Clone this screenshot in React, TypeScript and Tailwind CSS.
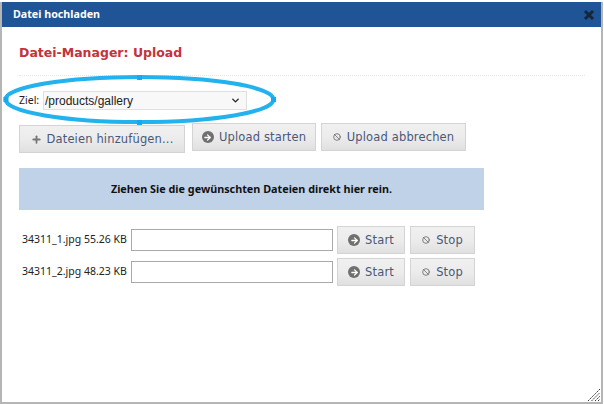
import { Plus, Ban, ArrowRight, ChevronDown } from 'lucide-react'

const btn =
  'flex items-center justify-center gap-[5px] border border-[#d4d4d4] bg-gradient-to-b from-[#f0f0f0] via-[#ececec] to-[#e0e0e0] pt-[2px] text-[#4a5878] font-["DejaVu_Sans",sans-serif] text-[11.5px] tracking-[0.15px]'

function GoIcon() {
  return (
    <span className="-mt-[2px] flex h-[12px] w-[12px] items-center justify-center rounded-full bg-[#707070]">
      <ArrowRight size={9} strokeWidth={3.5} className="text-white" />
    </span>
  )
}

function StopIcon() {
  return <Ban size={8} strokeWidth={2.5} className="-mt-[2px] mr-[1px] text-[#6a6a6a]" />
}

function FileRow({ name, size }: { name: string; size: string }) {
  return (
    <div className="flex h-[28px] items-center">
      <span className="ml-[3px] w-[109px] whitespace-nowrap font-['Noto_Sans',sans-serif] text-[10.5px] text-[#222]">
        {name} {size}
      </span>
      <div className="h-[22px] w-[202px] border border-[#aaa] bg-white" />
      <button className={`${btn} ml-[4px] h-[28px] w-[68px]`}>
        <GoIcon />
        Start
      </button>
      <button className={`${btn} ml-[5px] h-[28px] w-[65px]`}>
        <StopIcon />
        Stop
      </button>
    </div>
  )
}

export default function App() {
  return (
    <div className="relative h-[404px] w-[604px] overflow-hidden bg-white">
      <div className="mt-[2px] flex h-[402px] w-[603px] flex-col border-x-2 border-b-2 border-[#b5b5b5]">
        <div className="flex h-[25px] shrink-0 items-center justify-between bg-[#1f5496] pl-[11px] pr-[6px]">
          <span className="font-['Noto_Sans',sans-serif] text-[10.7px] font-bold text-white">Datei hochladen</span>
          <svg width="12" height="12" viewBox="0 0 12 12">
            <path d="M2 2 10 10M10 2 2 10" stroke="#16263a" strokeWidth="3" fill="none" />
          </svg>
        </div>

        <div className="relative flex-1 pl-[17px]">
          <h1 className="mt-[16px] font-['DejaVu_Sans',sans-serif] text-[12.5px] font-bold leading-[20px] text-[#c4323a]">
            Datei-Manager: Upload
          </h1>
          <div className="mr-[16px] mt-[12px] border-t border-dotted border-[#e6e6e6]" />

          <div className="mt-[15px] flex h-[19px] items-center">
            <span className="w-[24px] font-['Noto_Sans',sans-serif] text-[10.5px] text-[#222]">Ziel:</span>
            <div className="flex h-[19px] w-[204px] items-center justify-between border border-[#e0e0e0] bg-[#f8f8f8] pl-[1px] pr-[5px]">
              <span className="font-['Liberation_Sans',sans-serif] text-[12px] text-[#222]">/products/gallery</span>
              <ChevronDown size={11} strokeWidth={3} className="text-[#222]" />
            </div>
          </div>

          <div className="mt-[13px] flex items-start">
            <button className={`${btn} mt-[2px] h-[28px] w-[166px]`}>
              <Plus size={11} strokeWidth={4} className="-mt-[2px] text-[#777]" />
              Dateien hinzufügen...
            </button>
            <button className={`${btn} ml-[7px] h-[28px] w-[124px]`}>
              <GoIcon />
              Upload starten
            </button>
            <button className={`${btn} ml-[5px] h-[28px] w-[145px]`}>
              <StopIcon />
              Upload abbrechen
            </button>
          </div>

          <div className="mt-[15px] flex h-[42px] w-[465px] items-center justify-center bg-[#c0d2e8] font-['Noto_Sans',sans-serif] text-[10.8px] font-bold text-[#111]">
            Ziehen Sie die gewünschten Dateien direkt hier rein.
          </div>

          <div className="mt-[16px] flex flex-col gap-[4px]">
            <FileRow name="34311_1.jpg" size="55.26 KB" />
            <FileRow name="34311_2.jpg" size="48.23 KB" />
          </div>

          {/* resize grip */}
          <svg className="absolute bottom-[1px] right-[1px]" width="12" height="12" viewBox="0 0 12 12">
            <path d="M0 12 12 0M3.5 12 12 3.5M7 12 12 7M10 12 12 10" stroke="#333" strokeWidth="1" strokeDasharray="2 1" fill="none" />
          </svg>
        </div>
      </div>

      {/* highlight annotation over the select */}
      <svg className="absolute left-0 top-0" width="604" height="404" viewBox="0 0 604 404">
        <ellipse cx="139.5" cy="99.5" rx="134" ry="22.5" fill="none" stroke="#22b2ee" strokeWidth="4" />
        <rect x="3.5" y="97" width="5" height="5" fill="#1aa8e8" />
        <rect x="271" y="97" width="5" height="5" fill="#1aa8e8" />
        <rect x="137" y="75" width="5" height="5" fill="#1aa8e8" />
        <rect x="137" y="120" width="5" height="5" fill="#1aa8e8" />
      </svg>
    </div>
  )
}
